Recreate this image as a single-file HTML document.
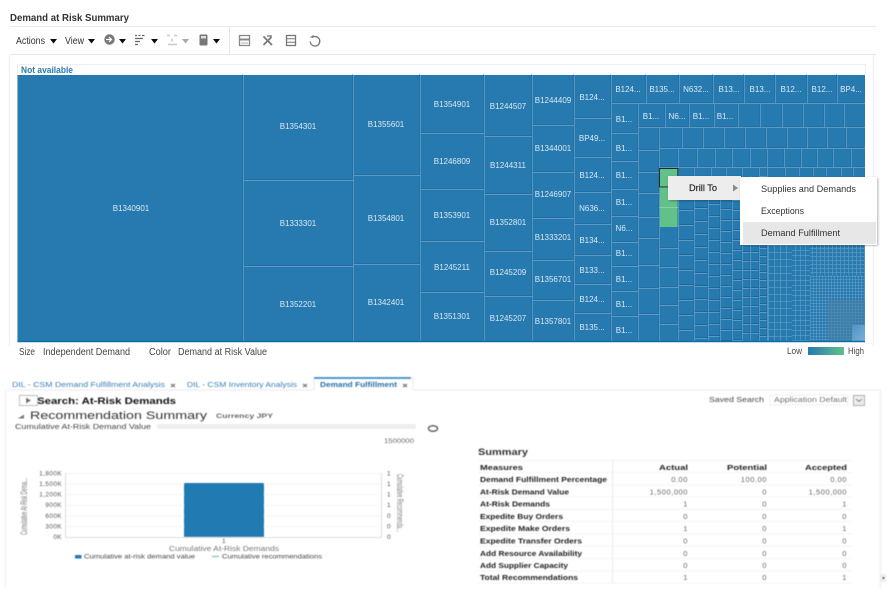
<!DOCTYPE html>
<html><head><meta charset="utf-8"><title>Demand at Risk Summary</title>
<style>
html,body{margin:0;padding:0;background:#fff;width:896px;height:600px;overflow:hidden}
svg{display:block;font-family:"Liberation Sans",sans-serif}
.tm text{font-size:8px;fill:#dbe8f1;text-anchor:middle}
.a{fill:#333}
.b{font-weight:bold;fill:#222}
.v{fill:#666;text-anchor:end;font-size:7.5px;letter-spacing:.55px}
.h{font-weight:bold;fill:#222;font-size:7.5px}
.hr{font-weight:bold;fill:#222;font-size:7.5px}
.tick{fill:#555;font-size:6.5px;letter-spacing:.35px}
</style></head><body>
<svg width="896" height="600" viewBox="0 0 896 600" xmlns="http://www.w3.org/2000/svg">
<defs>
<linearGradient id="lg"><stop offset="0" stop-color="#257ab0"/><stop offset="1" stop-color="#62c08a"/></linearGradient>
<linearGradient id="corner" x1="0" y1="0" x2="1" y2="1"><stop offset="0" stop-color="#4f93c4"/><stop offset="1" stop-color="#78b0d8"/></linearGradient>
<filter id="bl" x="-2%" y="-2%" width="104%" height="104%"><feGaussianBlur stdDeviation="0.5"/></filter>
<filter id="bl2" x="-2%" y="-2%" width="104%" height="104%"><feGaussianBlur stdDeviation="0.3"/></filter>
<filter id="sh" x="-10%" y="-10%" width="120%" height="120%"><feDropShadow dx="1" dy="1" stdDeviation="1.2" flood-color="#000" flood-opacity=".3"/></filter>
<pattern id="r15" width="20" height="15" patternUnits="userSpaceOnUse"><path d="M0 .5H20" stroke="#5b98c3"/><path d="M0 14.500H20" stroke="#1c6798"/></pattern>
<pattern id="r13" width="20" height="13" patternUnits="userSpaceOnUse"><path d="M0 .5H20" stroke="#5b98c3"/><path d="M0 12.500H20" stroke="#1c6798"/></pattern>
<pattern id="r12" width="20" height="12" patternUnits="userSpaceOnUse"><path d="M0 .5H20" stroke="#5b98c3"/><path d="M0 11.500H20" stroke="#1c6798"/></pattern>
<pattern id="r11" width="20" height="11" patternUnits="userSpaceOnUse"><path d="M0 .5H20" stroke="#5b98c3"/><path d="M0 10.500H20" stroke="#1c6798"/></pattern>
<pattern id="r10" width="20" height="10" patternUnits="userSpaceOnUse"><path d="M0 .5H20" stroke="#5b98c3"/><path d="M0 9.500H20" stroke="#1c6798"/></pattern>
<pattern id="r9" width="20" height="9" patternUnits="userSpaceOnUse"><path d="M0 .5H20" stroke="#5b98c3"/><path d="M0 8.500H20" stroke="#1c6798"/></pattern>
<pattern id="r8" width="20" height="8" patternUnits="userSpaceOnUse"><path d="M0 .5H20" stroke="#5b98c3"/><path d="M0 7.500H20" stroke="#1c6798"/></pattern>
<pattern id="g7" width="6" height="7" patternUnits="userSpaceOnUse"><path d="M0 .5H6M.5 0V7" stroke="#5b98c3" stroke-width=".8"/></pattern>
<pattern id="g5" width="5" height="5" patternUnits="userSpaceOnUse"><path d="M0 .5H5M.5 0V5" stroke="#5b98c3" stroke-width=".7"/></pattern>
<pattern id="g4" width="4" height="4" patternUnits="userSpaceOnUse"><path d="M0 .5H4M.5 0V4" stroke="#5b98c3" stroke-width=".7"/></pattern>
<pattern id="g3" width="3" height="3" patternUnits="userSpaceOnUse"><path d="M0 .5H3M.5 0V3" stroke="#6aa2c9" stroke-width=".5"/></pattern>
<path id="ln" fill="none" stroke-width=".9" d="
M243.500 75V341M353.500 75V341M420.500 75V341M484.500 75V341M532.500 75V341M574.500 75V341M611.500 75V341M638.500 103V341
M243 180.500H353M243 266.500H353
M353 175.500H420M353 264.500H420
M420 133.500H484M420 189.500H484M420 241.500H484M420 292.500H484
M484 136.500H532M484 194.500H532M484 251.500H532M484 296.500H532
M532 125.500H574M532 172.500H574M532 218.500H574M532 260.500H574M532 300.500H574
M574 118.500H611M574 157.500H611M574 192.500H611M574 224.500H611M574 255.500H611M574 284.500H611M574 313.500H611
M611 133.500H638M611 161.500H638M611 189.500H638M611 216.500H638M611 242.500H638M611 266.500H638M611 291.500H638M611 316.500H638
M611 103.500H865M646.500 75V103M679.500 75V103M713.500 75V103M744.500 75V103M775.500 75V103M807.500 75V103M837.500 75V103
M638 127.500H865M665.500 103V127M689.500 103V127M714.500 103V127M738.500 103V127M760.500 103V127M782.500 103V127M803.500 103V127M824.500 103V127M844.500 103V127
M659.500 127V341M638 150.500H659M638 172.500H659M638 193.500H659M638 217.500H659M638 238.500H659M638 265.500H659M638 288.500H659M638 314.500H659
M659 148.500H865M682.500 127V148M703.500 127V148M724.500 127V148M745.500 127V148M766.500 127V148M787.500 127V148M807.500 127V148M827.500 127V148M846.500 127V148
M659 167.500H865M678.500 148V341M697.500 148V167M715.500 148V167M732.500 148V167M750.500 148V167M767.500 148V167M784.500 148V167M801.500 148V167M817.500 148V167M833.500 148V167M851.500 148V167
M694.500 167V341M708.500 176V341M720.500 176V341M732.500 176V341M742.500 167V341M759.500 167V341M750.500 176V341M767.500 167V341M711.500 167V176M726.500 167V176M785.500 167V176M799.500 167V176M813.500 167V176M826.500 167V176M841.500 167V176M853.500 167V176
M659 248.500H678M659 267.500H678M659 287.500H678M659 305.500H678M659 324.500H678
"/>
</defs>

<!-- Header -->
<g filter="url(#bl2)">
<text x="10" y="21" class="b" font-size="10.500" textLength="119" lengthAdjust="spacingAndGlyphs" style="fill:#333">Demand at Risk Summary</text>
<path d="M10 26.500H876M10 54.500H876" stroke="#e6e8ea"/>
<path d="M229.500 27V54" stroke="#e3e5e7"/>
<text x="16" y="44" class="a" font-size="10.500" textLength="29" lengthAdjust="spacingAndGlyphs">Actions</text>
<text x="65" y="44" class="a" font-size="10.500" textLength="19" lengthAdjust="spacingAndGlyphs">View</text>
<g fill="#111">
<path d="M50 39h7l-3.500 4.500z"/><path d="M88 39h7l-3.500 4.500z"/><path d="M119 39h7l-3.500 4.500z"/><path d="M151 39h7l-3.500 4.500z"/><path d="M213 39h7l-3.500 4.500z"/>
</g>
<path d="M182 39h7l-3.500 4.500z" fill="#aaa"/>
<circle cx="109.500" cy="39.500" r="5.200" fill="#777"/><path d="M106 39.500h5M109 37l2.500 2.500-2.500 2.500" stroke="#fff" stroke-width="1.200" fill="none"/>
<path d="M135 35.500h2M138.500 35.500h2M142 35.500h2.500M135 38.500h8M135 41.500h5M135 44.500h3" stroke="#666" stroke-width="1.200"/>
<path d="M167 35.500h3M174 35.500h3M172 38.500v3M168 44.500h9" stroke="#ccd0d3" stroke-width="1.800"/>
<rect x="199.500" y="34.500" width="8" height="11" rx="1" fill="#777"/><rect x="201" y="36" width="5" height="2.500" fill="#ddd"/>
<path d="M239.500 35.500h10v10h-10z" fill="none" stroke="#888" stroke-width="1.300"/><path d="M239.500 39.500h10" stroke="#888" stroke-width="2"/><path d="M241 43h7" stroke="#aaa"/>
<path d="M263.500 36.500l8.500 8.500M271.500 37l-8 8" stroke="#777" stroke-width="1.700"/><path d="M267 36h5" stroke="#777" stroke-width="1.300"/>
<rect x="286.500" y="35.500" width="9" height="10" fill="none" stroke="#777" stroke-width="1.300"/><path d="M287 38.800h8M287 42.200h8" stroke="#777"/>
<path d="M312 37.500a4.800 4.800 0 1 1-1.800 4" fill="none" stroke="#777" stroke-width="1.300"/><path d="M309.500 37.500h4v-2.500z" fill="#777"/>

<!-- top panel frame -->
<path d="M9.500 55V346M873.500 55V346" stroke="#f0f1f3" stroke-width="1.500"/>
<path d="M17 64.500H866M865.500 64V75M17.500 64V342" stroke="#eceef0"/>
<text x="21" y="73" font-size="9" font-weight="bold" fill="#2a7ab0" textLength="52" lengthAdjust="spacingAndGlyphs">Not available</text>
</g>

<!-- Treemap -->
<g filter="url(#bl2)">
<rect x="17.500" y="75" width="847.500" height="266.500" fill="#257ab0"/>
<rect x="827" y="300" width="38" height="41" fill="#3a7ca9"/>
<rect x="678" y="176" width="16" height="165" fill="url(#r15)"/>
<rect x="694" y="176" width="14" height="165" fill="url(#r13)"/>
<rect x="708" y="176" width="12" height="165" fill="url(#r12)"/>
<rect x="720" y="176" width="12" height="165" fill="url(#r11)"/>
<rect x="732" y="176" width="10" height="165" fill="url(#r10)"/>
<rect x="742" y="176" width="8" height="165" fill="url(#r9)"/>
<rect x="750" y="176" width="9" height="165" fill="url(#r9)"/>
<rect x="759" y="176" width="9" height="165" fill="url(#r8)"/>
<rect x="768" y="245" width="24" height="96" fill="url(#g7)"/>
<rect x="792" y="245" width="18" height="96" fill="url(#g5)"/>
<rect x="810" y="245" width="55" height="30" fill="url(#g4)"/>
<rect x="810" y="275" width="55" height="25" fill="url(#g3)"/>
<rect x="810" y="300" width="17" height="41" fill="url(#g3)"/>
<rect x="827" y="300" width="38" height="41" fill="url(#g3)" opacity=".5"/>
<rect x="852" y="325" width="13" height="16" fill="url(#corner)"/>
<rect x="659.500" y="168" width="18.500" height="59" fill="#62c08a"/>
<g stroke="#1c6798" opacity=".45"><use href="#ln" transform="translate(-1,-1)"/></g>
<g stroke="#5b98c3"><use href="#ln"/></g>
<path d="M659.500 187.500H678M659.500 207.500H678" stroke="#86cfa3" stroke-width=".9"/>
<rect x="659.500" y="168.500" width="18.500" height="18.500" fill="none" stroke="#1a2a22" stroke-width="1"/>
<path d="M17.500 341.500H865" stroke="#0f6ea8" stroke-width="1.500"/>
<g class="tm">
<text x="131" y="211">B1340901</text>
<text x="298" y="129">B1354301</text><text x="298" y="226">B1333301</text><text x="298" y="307">B1352201</text>
<text x="386" y="127">B1355601</text><text x="386" y="221">B1354801</text><text x="386" y="305">B1342401</text>
<text x="452" y="107">B1354901</text><text x="452" y="164">B1246809</text><text x="452" y="218">B1353901</text><text x="452" y="270">B1245211</text><text x="452" y="319">B1351301</text>
<text x="508" y="109">B1244507</text><text x="508" y="168">B1244311</text><text x="508" y="225">B1352801</text><text x="508" y="275">B1245209</text><text x="508" y="321">B1245207</text>
<text x="553" y="103">B1244409</text><text x="553" y="151">B1344001</text><text x="553" y="197">B1246907</text><text x="553" y="240">B1333201</text><text x="553" y="282">B1356701</text><text x="553" y="324">B1357801</text>
<text x="592" y="100">B124...</text><text x="592" y="141">BP49...</text><text x="592" y="178">B124...</text><text x="592" y="211">N636...</text><text x="592" y="243">B134...</text><text x="592" y="273">B133...</text><text x="592" y="302">B124...</text><text x="592" y="330">B135...</text>
<text x="624" y="122">B1...</text><text x="624" y="151">B1...</text><text x="624" y="178">B1...</text><text x="624" y="205">B1...</text><text x="624" y="231">N6...</text><text x="624" y="256">B1...</text><text x="624" y="282">B1...</text><text x="624" y="307">B1...</text><text x="624" y="333">B1...</text>
<text x="628" y="92">B124...</text><text x="662" y="92">B135...</text><text x="696" y="92">N632...</text><text x="729" y="92">B13...</text><text x="760" y="92">B13...</text><text x="791" y="92">B12...</text><text x="822" y="92">B12...</text><text x="851" y="92">BP4...</text>
<text x="651" y="119">B1...</text><text x="677" y="119">N6...</text><text x="701" y="119">B1...</text><text x="725" y="119">B1...</text>
</g>
</g>

<!-- Context menu -->
<g filter="url(#bl2)">
<rect x="668" y="176" width="73" height="24" fill="#ededed" filter="url(#sh)"/>
<text x="689" y="191" font-size="9.500" fill="#222" stroke="#222" stroke-width=".15" textLength="28" lengthAdjust="spacingAndGlyphs">Drill To</text>
<path d="M733 184.500l5 3.500-5 3.500z" fill="#888"/>
<rect x="740" y="177" width="137" height="68" fill="#fff" filter="url(#sh)"/>
<rect x="743" y="222" width="133" height="22" fill="#e7e7e7"/>
<g font-size="9.500" fill="#333">
<text x="761" y="192" textLength="95" lengthAdjust="spacingAndGlyphs">Supplies and Demands</text>
<text x="761" y="214" textLength="43" lengthAdjust="spacingAndGlyphs">Exceptions</text>
<text x="761" y="236" textLength="79" lengthAdjust="spacingAndGlyphs">Demand Fulfillment</text>
</g>
</g>

<!-- Treemap footer -->
<g filter="url(#bl2)" font-size="10" fill="#444">
<text x="19" y="355" textLength="16" lengthAdjust="spacingAndGlyphs">Size</text>
<text x="43" y="355" textLength="87" lengthAdjust="spacingAndGlyphs">Independent Demand</text>
<text x="149" y="355" textLength="22" lengthAdjust="spacingAndGlyphs">Color</text>
<text x="178" y="355" textLength="89" lengthAdjust="spacingAndGlyphs">Demand at Risk Value</text>
<text x="787" y="354" font-size="9" textLength="15" lengthAdjust="spacingAndGlyphs">Low</text>
<rect x="808" y="347" width="36" height="8" fill="url(#lg)"/>
<text x="848" y="354" font-size="9" textLength="16" lengthAdjust="spacingAndGlyphs">High</text>
</g>

<!-- Bottom panel -->
<g filter="url(#bl)">
<path d="M5.500 390H314M413 390H880.500V588" fill="none" stroke="#f0f1f3" stroke-width="1.500"/>
<path d="M5.500 390V588" stroke="#f0f1f3" stroke-width="1.500"/>
<path d="M314 390V378H413V390" fill="none" stroke="#e8eaec"/>
<path d="M314 378H411" stroke="#3a8cc4" stroke-width="1.800"/>
<g font-size="7.500" fill="#3b7fb3">
<text x="12" y="387" textLength="153" lengthAdjust="spacingAndGlyphs">DIL - CSM Demand Fulfillment Analysis</text>
<text x="187" y="387" textLength="110" lengthAdjust="spacingAndGlyphs">DIL - CSM Inventory Analysis</text>
<text x="320" y="387" font-weight="bold" fill="#2a6fa5" textLength="77" lengthAdjust="spacingAndGlyphs">Demand Fulfillment</text>
</g>
<path d="M171 384l4 3M175 384l-4 3M303 384l4 3M307 384l-4 3M403 384l4 3M407 384l-4 3" stroke="#555"/>

<rect x="19.500" y="395.500" width="18" height="10" fill="#fff" stroke="#bbb"/>
<path d="M26 397.500l5 3-5 3z" fill="#666"/>
<text x="37" y="404" font-size="9" font-weight="bold" fill="#111" textLength="139" lengthAdjust="spacingAndGlyphs">Search: At-Risk Demands</text>
<path d="M18 418.500l6-4v4z" fill="#777"/>
<text x="30" y="419" font-size="11" fill="#333" textLength="177" lengthAdjust="spacingAndGlyphs">Recommendation Summary</text>
<text x="216" y="418" font-size="6.500" font-weight="bold" fill="#666" textLength="57" lengthAdjust="spacingAndGlyphs">Currency  JPY</text>
<text x="15" y="429" font-size="7" fill="#444" textLength="136" lengthAdjust="spacingAndGlyphs">Cumulative At-Risk Demand Value</text>
<rect x="157" y="424" width="259" height="5" rx="2" fill="#eceef0"/>
<ellipse cx="433" cy="428.500" rx="4.500" ry="2.800" fill="none" stroke="#666" stroke-width="1.500"/>
<text x="384" y="443" font-size="6.500" fill="#666" textLength="30" lengthAdjust="spacingAndGlyphs">1500000</text>

<text x="709" y="402" font-size="7" fill="#444" textLength="55" lengthAdjust="spacingAndGlyphs">Saved Search</text>
<rect x="770" y="395" width="78" height="10" fill="#fff" stroke="#f0f0f0"/>
<text x="774" y="402" font-size="7" fill="#444" textLength="73" lengthAdjust="spacingAndGlyphs">Application Default</text>
<rect x="853.500" y="395.500" width="11" height="10" fill="#eee" stroke="#aaa"/>
<path d="M856 399l3 2.500 3-2.500" fill="none" stroke="#666"/>

<!-- Chart -->
<path d="M65 473.500H381M65 484H381M65 494.500H381M65 505.500H381M65 516H381M65 526.500H381" stroke="#f4f5f6"/>
<path d="M65.500 473V537.500H381.500V473" fill="none" stroke="#dcdfe1"/>
<rect x="184" y="483" width="80" height="54" fill="#237ab3"/>
<g class="tick" text-anchor="end">
<text x="62" y="475.500">1,800K</text><text x="62" y="486">1,500K</text><text x="62" y="496.500">1,200K</text><text x="62" y="507">900K</text><text x="62" y="518">600K</text><text x="62" y="528.500">300K</text><text x="62" y="539">0K</text>
</g>
<g class="tick" text-anchor="middle">
<text x="389" y="475.500">1</text><text x="389" y="486">1</text><text x="389" y="496.500">1</text><text x="389" y="507">1</text><text x="389" y="518">0</text><text x="389" y="528.500">0</text><text x="389" y="539">0</text>
<text x="224" y="543">1</text>
</g>
<text x="169" y="551" font-size="7.500" fill="#777" textLength="110" lengthAdjust="spacingAndGlyphs">Cumulative At-Risk Demands</text>
<rect x="75" y="555" width="6.500" height="3.500" fill="#237ab3"/>
<text x="84" y="558.500" font-size="6.500" fill="#444" textLength="111" lengthAdjust="spacingAndGlyphs">Cumulative at-risk demand value</text>
<path d="M212 556.500h7" stroke="#62c08a"/>
<text x="222" y="558.500" font-size="6.500" fill="#444" textLength="100" lengthAdjust="spacingAndGlyphs">Cumulative recommendations</text>
<text transform="translate(27 535) rotate(-90)" font-size="9" fill="#777" textLength="57" lengthAdjust="spacingAndGlyphs">Cumulative At-Risk Dema...</text>
<text transform="translate(397 474) rotate(90)" font-size="9" fill="#777" textLength="58" lengthAdjust="spacingAndGlyphs">Cumulative Recommenda...</text>

<!-- Summary table -->
<text x="478" y="455" font-size="9.500" font-weight="bold" fill="#333" textLength="50" lengthAdjust="spacingAndGlyphs">Summary</text>
<path d="M478 460.500H852M478 472.500H852M478 485H852M478 497H852M478 509.500H852M478 521.500H852M478 534H852M478 546H852M478 558.500H852M478 571H852M478 583H852" stroke="#f3f4f5"/>
<path d="M612.500 460V583" stroke="#eaecee" stroke-width="1.200"/>
<g class="h">
<text x="480" y="470" textLength="43" lengthAdjust="spacingAndGlyphs">Measures</text>
<text x="480" y="482" textLength="127" lengthAdjust="spacingAndGlyphs">Demand Fulfillment Percentage</text>
<text x="480" y="494.500" textLength="89" lengthAdjust="spacingAndGlyphs">At-Risk Demand Value</text>
<text x="480" y="506.500" textLength="70" lengthAdjust="spacingAndGlyphs">At-Risk Demands</text>
<text x="480" y="519" textLength="83" lengthAdjust="spacingAndGlyphs">Expedite Buy Orders</text>
<text x="480" y="531" textLength="90" lengthAdjust="spacingAndGlyphs">Expedite Make Orders</text>
<text x="480" y="543.500" textLength="102" lengthAdjust="spacingAndGlyphs">Expedite Transfer Orders</text>
<text x="480" y="556" textLength="102" lengthAdjust="spacingAndGlyphs">Add Resource Availability</text>
<text x="480" y="568" textLength="88" lengthAdjust="spacingAndGlyphs">Add Supplier Capacity</text>
<text x="480" y="580" textLength="98" lengthAdjust="spacingAndGlyphs">Total Recommendations</text>
</g>
<g class="hr">
<text x="659" y="470" textLength="29" lengthAdjust="spacingAndGlyphs">Actual</text><text x="727" y="470" textLength="40" lengthAdjust="spacingAndGlyphs">Potential</text><text x="805" y="470" textLength="42" lengthAdjust="spacingAndGlyphs">Accepted</text>
</g>
<g class="v">
<text x="688" y="482">0.00</text><text x="767" y="482">100.00</text><text x="847" y="482">0.00</text>
<text x="688" y="494.500">1,500,000</text><text x="767" y="494.500">0</text><text x="847" y="494.500">1,500,000</text>
<text x="688" y="506.500">1</text><text x="767" y="506.500">0</text><text x="847" y="506.500">1</text>
<text x="688" y="519">0</text><text x="767" y="519">0</text><text x="847" y="519">0</text>
<text x="688" y="531">1</text><text x="767" y="531">0</text><text x="847" y="531">1</text>
<text x="688" y="543.500">0</text><text x="767" y="543.500">0</text><text x="847" y="543.500">0</text>
<text x="688" y="556">0</text><text x="767" y="556">0</text><text x="847" y="556">0</text>
<text x="688" y="568">0</text><text x="767" y="568">0</text><text x="847" y="568">0</text>
<text x="688" y="580">1</text><text x="767" y="580">0</text><text x="847" y="580">1</text>
</g>
<rect x="880" y="574" width="6" height="8" fill="#eee"/><rect x="882.500" y="577" width="1.800" height="2" fill="#222"/>
</g>
</svg>
</body></html>
